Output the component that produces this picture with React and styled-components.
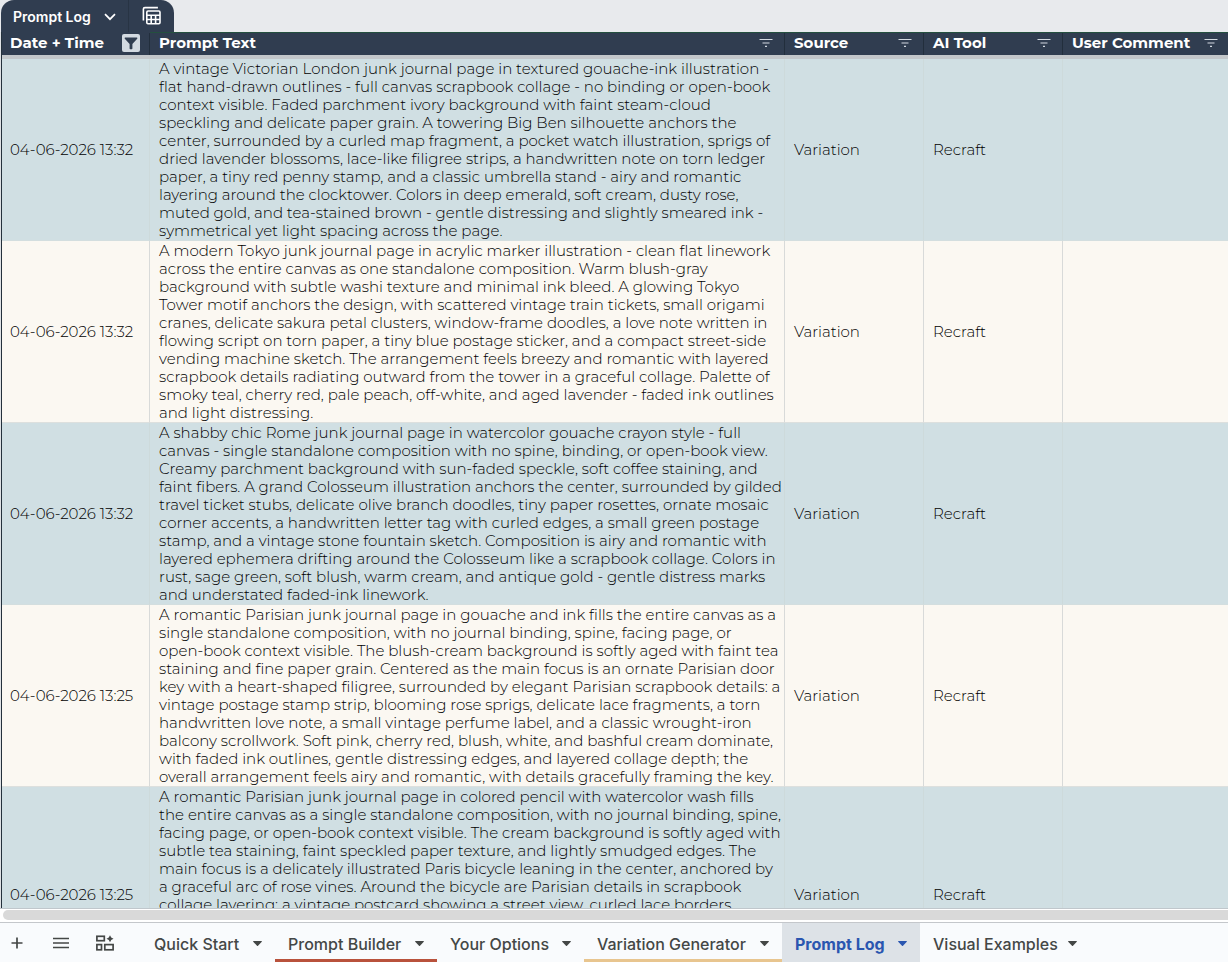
import React from "react";
import styled, { createGlobalStyle, css } from "styled-components";

const GlobalStyle = createGlobalStyle`
  *, *::before, *::after { box-sizing: border-box; }
  html, body { margin: 0; height: 100%; }
  body { overflow: hidden; background: #f9fbfd; color: #000; }
  body, button { font-family: Montserrat, Inter, "Open Sans", sans-serif; }
  button { margin: 0; padding: 0; border: 0; background: none; color: inherit; cursor: pointer; }
  svg { flex: none; }
`;

const navy = "#303d50";
const uiFont = css`font-family: "Google Sans", Inter, Roboto, sans-serif;`;

const Sheet = styled.div`
  display: flex;
  flex-direction: column;
  height: 100vh;
`;

const TopStrip = styled.header`
  flex: none;
  height: 32px;
  padding-left: 1px;
  background: #e8eaed;
`;

const TableChip = styled.div`
  display: inline-flex;
  height: 32px;
  border-radius: 13px 13px 0 0;
  background: ${navy};
  color: #fff;
`;

const ChipName = styled.button`
  ${uiFont}
  display: flex;
  align-items: center;
  justify-content: space-between;
  width: 128px;
  padding: 1px 12px 0;
  border-right: 1px solid #283444;
  font-size: 14px;
  font-weight: 600;
  white-space: nowrap;
`;

const ChipAction = styled.button`
  display: flex;
  align-items: center;
  justify-content: center;
  width: 45px;
`;

const GridArea = styled.main`
  flex: 1;
  min-height: 0;
  overflow: hidden;
  padding-left: 1px;
  background: #dfe2e5;
`;

const LogTable = styled.table`
  width: 100%;
  table-layout: fixed;
  border-collapse: separate;
  border-spacing: 0;
  border-left: 1px solid #24313c;
  font-size: 15px;
  font-weight: 300;
  line-height: 18px;
`;

const Column = styled.col`
  width: ${(p) => (p.$width ? `${p.$width}px` : "auto")};
`;

const HeadCell = styled.th`
  height: 27px;
  padding: 0 ${(p) => (p.$last ? "8px" : "10px")} 0 9px;
  background: ${navy};
  border-top: 1px solid #24503f;
  border-bottom: 4px solid #c3c7ca;
  box-shadow: ${(p) => (p.$last ? "none" : "inset -1px 0 #222e3c")};
  color: #fff;
  font-size: 15px;
  font-weight: 700;
  text-align: left;
  vertical-align: top;
  white-space: nowrap;

  &:first-child {
    padding-left: 8px;
    border-top-color: ${navy};
  }
`;

const HeadContent = styled.div`
  display: flex;
  align-items: center;
  justify-content: space-between;
  height: 20px;
`;

const FilterButton = styled.button`
  display: flex;
  align-items: center;
  justify-content: center;
  width: 18px;
  height: 18px;
  border-radius: 2px;
  background: ${(p) => (p.$active ? "#d3dae1" : "transparent")};
  color: ${(p) => (p.$active ? navy : "#d3dae1")};
`;

const LogRow = styled.tr`
  height: ${(p) => (p.$tall ? "216px" : "182px")};
  background: ${(p) => (p.$tint ? "#d0dfe3" : "#fbf8f2")};
`;

const Cell = styled.td`
  padding: 1px 9px 0;
  border-bottom: 1px solid ${(p) => (p.$tint ? "#d3dedf" : "#dde0de")};
  border-right: ${(p) => (p.$last ? "0" : `1px solid ${p.$tint ? "#cddadb" : "#d8dad9"}`)};
  vertical-align: middle;
  white-space: nowrap;

  &:first-child {
    padding-left: 8px;
  }
`;

const PromptCell = styled(Cell)`
  vertical-align: top;
  white-space: pre;
`;

const ScrollTrack = styled.div`
  flex: none;
  height: 15px;
  padding: 1px 0 2px 3px;
  border-top: 1px solid #c0c7cc;
  border-bottom: 1px solid #c4c7cb;
  background: #fff;
`;

const ScrollThumb = styled.div`
  height: 10px;
  border-radius: 5px 0 0 5px;
  background: #d9d9d9;
`;

const BottomBar = styled.nav`
  ${uiFont}
  flex: none;
  display: flex;
  height: 39px;
  background: #f9fbfd;
  color: #444746;
`;

const Tools = styled.div`
  display: flex;
  align-items: center;
  gap: 20px;
  width: 141px;
  padding-left: 5px;
`;

const ToolButton = styled.button`
  display: flex;
  align-items: center;
  justify-content: center;
  width: 24px;
  height: 24px;
`;

const SheetTab = styled.button`
  ${uiFont}
  display: flex;
  align-items: center;
  justify-content: space-between;
  width: ${(p) => p.$width}px;
  padding: 5px 13px 0;
  border-bottom: 3px solid ${(p) => p.$line || "transparent"};
  background: ${(p) => (p.$active ? "#dde2e7" : "transparent")};
  color: ${(p) => (p.$active ? "#2a56b0" : "#444746")};
  font-size: 16px;
  font-weight: ${(p) => (p.$active ? 700 : 500)};
  white-space: nowrap;
`;

const FilterLines = () => (
  <svg width="14" height="10" viewBox="0 0 14 10" fill="none" stroke="currentColor" strokeWidth="1.2" aria-hidden="true">
    <path d="M.5 1.5h13M3.5 5h7M6 8.3h2" />
  </svg>
);

const Funnel = () => (
  <svg width="14" height="14" viewBox="0 0 14 14" fill="currentColor" aria-hidden="true">
    <path d="M1.4 1.5h11.2c.7 0 1 .7.6 1.2L8.4 8v4.4c0 .5-.3.8-.8.8H6.4c-.5 0-.8-.3-.8-.8V8L.8 2.7c-.4-.5-.1-1.2.6-1.2z" />
  </svg>
);

const Chevron = () => (
  <svg width="12" height="8" viewBox="0 0 12 8" fill="none" stroke="currentColor" strokeWidth="1.7" aria-hidden="true">
    <path d="M1 1.2l5 5 5-5" />
  </svg>
);

const TableIcon = () => (
  <svg width="20" height="20" viewBox="0 0 20 20" fill="none" stroke="currentColor" strokeWidth="1.6" aria-hidden="true">
    <path d="M1.4 14.5V3.1c0-.8.7-1.5 1.5-1.5h13" />
    <rect x="4.8" y="5" width="13.2" height="12.8" rx="1.2" />
    <path d="M5 9.2h13M5 13.5h13M9.2 9.2v8.6M13.6 9.2v8.6" />
  </svg>
);

const Plus = () => (
  <svg width="12" height="12" viewBox="0 0 12 12" stroke="currentColor" strokeWidth="1.7" aria-hidden="true">
    <path d="M6 .5v11M.5 6h11" />
  </svg>
);

const Lines = () => (
  <svg width="16" height="12" viewBox="0 0 16 12" stroke="currentColor" strokeWidth="1.6" aria-hidden="true">
    <path d="M0 1.5h16M0 6h16M0 10.5h16" />
  </svg>
);

const Blocks = () => (
  <svg width="18" height="16" viewBox="0 0 18 16" fill="none" stroke="currentColor" strokeWidth="1.7" aria-hidden="true">
    <rect x=".9" y="1.3" width="7.4" height="4.4" />
    <rect x=".9" y="9.6" width="4.6" height="5.2" />
    <rect x="8.8" y="9.6" width="8.3" height="5.2" />
    <path d="M14 .2l1.2 2.3 2.3 1.2-2.3 1.2L14 7.2l-1.2-2.3-2.3-1.2 2.3-1.2z" fill="currentColor" stroke="none" />
  </svg>
);

const Caret = () => (
  <svg width="9" height="5" viewBox="0 0 9 5" fill="currentColor" aria-hidden="true">
    <path d="M.6 0h7.8c.5 0 .7.5.4.8L5 4.7c-.3.3-.7.3-1 0L.2.8C-.1.5.1 0 .6 0z" />
  </svg>
);

const columns = [
  { name: "Date + Time", width: 148, filtered: true },
  { name: "Prompt Text", width: 635 },
  { name: "Source", width: 139 },
  { name: "AI Tool", width: 139 },
  { name: "User Comment" },
];

const entries = [
  {
    time: "04-06-2026 13:32",
    prompt: `A vintage Victorian London junk journal page in textured gouache-ink illustration -
flat hand-drawn outlines - full canvas scrapbook collage - no binding or open-book
context visible. Faded parchment ivory background with faint steam-cloud
speckling and delicate paper grain. A towering Big Ben silhouette anchors the
center, surrounded by a curled map fragment, a pocket watch illustration, sprigs of
dried lavender blossoms, lace-like filigree strips, a handwritten note on torn ledger
paper, a tiny red penny stamp, and a classic umbrella stand - airy and romantic
layering around the clocktower. Colors in deep emerald, soft cream, dusty rose,
muted gold, and tea-stained brown - gentle distressing and slightly smeared ink -
symmetrical yet light spacing across the page.`,
  },
  {
    time: "04-06-2026 13:32",
    prompt: `A modern Tokyo junk journal page in acrylic marker illustration - clean flat linework
across the entire canvas as one standalone composition. Warm blush-gray
background with subtle washi texture and minimal ink bleed. A glowing Tokyo
Tower motif anchors the design, with scattered vintage train tickets, small origami
cranes, delicate sakura petal clusters, window-frame doodles, a love note written in
flowing script on torn paper, a tiny blue postage sticker, and a compact street-side
vending machine sketch. The arrangement feels breezy and romantic with layered
scrapbook details radiating outward from the tower in a graceful collage. Palette of
smoky teal, cherry red, pale peach, off-white, and aged lavender - faded ink outlines
and light distressing.`,
  },
  {
    time: "04-06-2026 13:32",
    prompt: `A shabby chic Rome junk journal page in watercolor gouache crayon style - full
canvas - single standalone composition with no spine, binding, or open-book view.
Creamy parchment background with sun-faded speckle, soft coffee staining, and
faint fibers. A grand Colosseum illustration anchors the center, surrounded by gilded
travel ticket stubs, delicate olive branch doodles, tiny paper rosettes, ornate mosaic
corner accents, a handwritten letter tag with curled edges, a small green postage
stamp, and a vintage stone fountain sketch. Composition is airy and romantic with
layered ephemera drifting around the Colosseum like a scrapbook collage. Colors in
rust, sage green, soft blush, warm cream, and antique gold - gentle distress marks
and understated faded-ink linework.`,
  },
  {
    time: "04-06-2026 13:25",
    prompt: `A romantic Parisian junk journal page in gouache and ink fills the entire canvas as a
single standalone composition, with no journal binding, spine, facing page, or
open-book context visible. The blush-cream background is softly aged with faint tea
staining and fine paper grain. Centered as the main focus is an ornate Parisian door
key with a heart-shaped filigree, surrounded by elegant Parisian scrapbook details: a
vintage postage stamp strip, blooming rose sprigs, delicate lace fragments, a torn
handwritten love note, a small vintage perfume label, and a classic wrought-iron
balcony scrollwork. Soft pink, cherry red, blush, white, and bashful cream dominate,
with faded ink outlines, gentle distressing edges, and layered collage depth; the
overall arrangement feels airy and romantic, with details gracefully framing the key.`,
  },
  {
    time: "04-06-2026 13:25",
    tall: true,
    prompt: `A romantic Parisian junk journal page in colored pencil with watercolor wash fills
the entire canvas as a single standalone composition, with no journal binding, spine,
facing page, or open-book context visible. The cream background is softly aged with
subtle tea staining, faint speckled paper texture, and lightly smudged edges. The
main focus is a delicately illustrated Paris bicycle leaning in the center, anchored by
a graceful arc of rose vines. Around the bicycle are Parisian details in scrapbook
collage layering: a vintage postcard showing a street view, curled lace borders,`,
  },
];

const tabs = [
  { name: "Quick Start", width: 134 },
  { name: "Prompt Builder", width: 162, line: "#b9523c" },
  { name: "Your Options", width: 147 },
  { name: "Variation Generator", width: 198, line: "#e8c58f" },
  { name: "Prompt Log", width: 138, active: true },
  { name: "Visual Examples", width: 170 },
];

export default function App() {
  return (
    <Sheet>
      <GlobalStyle />
      <TopStrip>
        <TableChip>
          <ChipName>Prompt Log<Chevron /></ChipName>
          <ChipAction aria-label="Table views"><TableIcon /></ChipAction>
        </TableChip>
      </TopStrip>
      <GridArea>
        <LogTable>
          <colgroup>
            {columns.map((c) => <Column key={c.name} $width={c.width} />)}
          </colgroup>
          <thead>
            <tr>
              {columns.map((c, i) => (
                <HeadCell key={c.name} scope="col" $last={i === columns.length - 1}>
                  <HeadContent>
                    {c.name}
                    <FilterButton $active={c.filtered} aria-label={`Filter ${c.name}`}>
                      {c.filtered ? <Funnel /> : <FilterLines />}
                    </FilterButton>
                  </HeadContent>
                </HeadCell>
              ))}
            </tr>
          </thead>
          <tbody>
            {entries.map((e, i) => {
              const tint = i % 2 === 0;
              return (
                <LogRow key={i} $tint={tint} $tall={e.tall}>
                  <Cell $tint={tint}>{e.time}</Cell>
                  <PromptCell $tint={tint}>{e.prompt}</PromptCell>
                  <Cell $tint={tint}>Variation</Cell>
                  <Cell $tint={tint}>Recraft</Cell>
                  <Cell $tint={tint} $last />
                </LogRow>
              );
            })}
          </tbody>
        </LogTable>
      </GridArea>
      <ScrollTrack><ScrollThumb /></ScrollTrack>
      <BottomBar>
        <Tools>
          <ToolButton aria-label="Add sheet"><Plus /></ToolButton>
          <ToolButton aria-label="All sheets"><Lines /></ToolButton>
          <ToolButton aria-label="Building blocks"><Blocks /></ToolButton>
        </Tools>
        {tabs.map((t) => (
          <SheetTab key={t.name} $width={t.width} $line={t.line} $active={t.active}>
            {t.name}<Caret />
          </SheetTab>
        ))}
      </BottomBar>
    </Sheet>
  );
}
